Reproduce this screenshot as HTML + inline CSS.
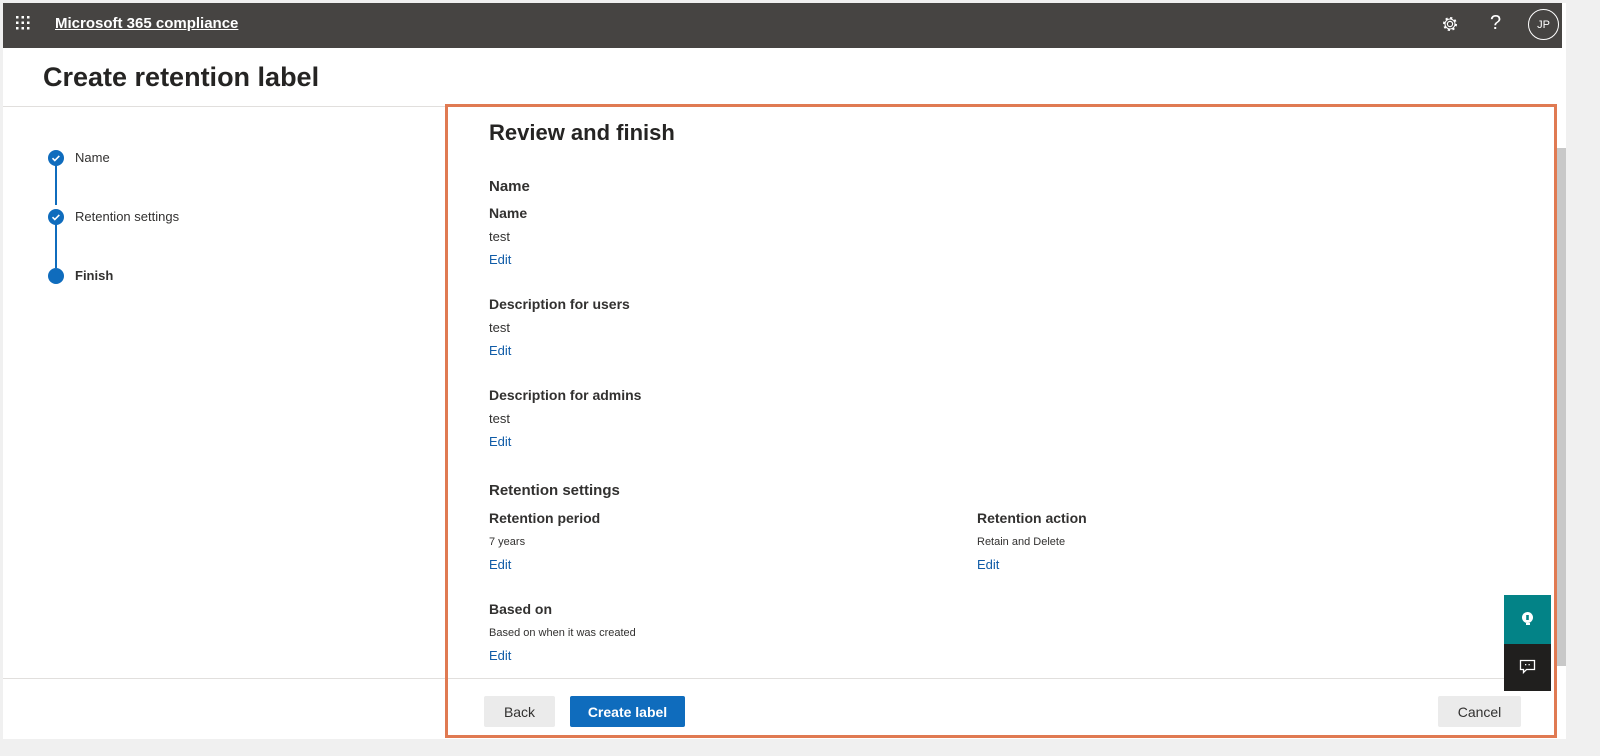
<!DOCTYPE html>
<html><head><meta charset="utf-8"><style>
*{margin:0;padding:0;box-sizing:border-box}
body{width:1600px;height:756px;background:#f0f0f0;font-family:"Segoe UI","Liberation Sans",sans-serif;color:#323130;position:relative;overflow:hidden}
.a{position:absolute;white-space:nowrap}
.page{position:absolute;left:3px;top:3px;width:1563px;height:736px;background:#fff}
.top{position:absolute;left:3px;top:3px;width:1559px;height:45px;background:#464442}
.h{font-weight:bold;font-size:14px;color:#323130}
.v{font-size:13px;color:#323130}
.s{font-size:11px;color:#323130}
.e{font-size:13px;color:#0f5ba7}
.btn{position:absolute;height:31px;font-size:14px;display:flex;align-items:center;justify-content:center;border-radius:2px}
</style></head><body>
<div class="page"></div>
<div class="top"></div>
<svg class="a" style="left:15px;top:15px" width="16" height="16"><g fill="#fff"><rect x="1" y="1" width="2.5" height="2.5"/><rect x="6.5" y="1" width="2.5" height="2.5"/><rect x="12" y="1" width="2.5" height="2.5"/><rect x="1" y="6.5" width="2.5" height="2.5"/><rect x="6.5" y="6.5" width="2.5" height="2.5"/><rect x="12" y="6.5" width="2.5" height="2.5"/><rect x="1" y="12" width="2.5" height="2.5"/><rect x="6.5" y="12" width="2.5" height="2.5"/><rect x="12" y="12" width="2.5" height="2.5"/></g></svg>
<div class="a" style="left:55px;top:15px;color:#fff;font-size:15px;font-weight:bold;text-decoration:underline">Microsoft 365 compliance</div>
<svg class="a" style="left:1441px;top:15px" width="18" height="18" viewBox="0 0 18 18"><circle cx="9" cy="9" r="2.6" fill="none" stroke="#fff" stroke-width="1.2"/><circle cx="9" cy="9" r="6" fill="none" stroke="#fff" stroke-width="2" stroke-dasharray="2.2 2.5"/><circle cx="9" cy="9" r="5" fill="none" stroke="#fff" stroke-width="1"/></svg>
<div class="a" style="left:1490px;top:12px;color:#fff;font-size:20px">?</div>
<div class="a" style="left:1528px;top:9px;width:31px;height:31px;border:1.5px solid #fff;border-radius:50%;color:#fff;font-size:11px;display:flex;align-items:center;justify-content:center">JP</div>
<div class="a" style="left:43px;top:62px;font-size:27px;font-weight:bold;color:#252423">Create retention label</div>
<div class="a" style="left:3px;top:106px;width:442px;height:1px;background:#e1dfdd"></div>
<div class="a" style="left:3px;top:678px;width:442px;height:1px;background:#e1dfdd"></div>
<div class="a" style="left:55px;top:165px;width:2px;height:40px;background:#0f6cbd"></div>
<div class="a" style="left:55px;top:224px;width:2px;height:44px;background:#0f6cbd"></div>
<svg class="a" style="left:48px;top:150px" width="16" height="16"><circle cx="8" cy="8" r="8" fill="#0f6cbd"/><path d="M4.5 8.2l2.3 2.3 4.5-4.6" stroke="#fff" stroke-width="1.6" fill="none"/></svg>
<svg class="a" style="left:48px;top:209px" width="16" height="16"><circle cx="8" cy="8" r="8" fill="#0f6cbd"/><path d="M4.5 8.2l2.3 2.3 4.5-4.6" stroke="#fff" stroke-width="1.6" fill="none"/></svg>
<div class="a" style="left:48px;top:268px;width:16px;height:16px;border-radius:50%;background:#0f6cbd"></div>
<div class="a v" style="left:75px;top:150px">Name</div>
<div class="a v" style="left:75px;top:209px">Retention settings</div>
<div class="a v" style="left:75px;top:268px;font-weight:bold">Finish</div>
<div class="a" style="left:445px;top:104px;width:1112px;height:634px;border:3px solid #e07a52"></div>
<div class="a" style="left:448px;top:678px;width:1056px;height:1px;background:#e1dfdd"></div>
<div class="a" style="left:1557px;top:148px;width:9px;height:518px;background:#c8c8c8"></div>
<div class="a" style="left:489px;top:120px;font-size:22px;font-weight:bold;color:#252423">Review and finish</div>
<div class="a" style="left:489px;top:178px;font-size:15px;font-weight:bold">Name</div>
<div class="a h" style="left:489px;top:205px;font-weight:600">Name</div>
<div class="a v" style="left:489px;top:229px">test</div>
<div class="a e" style="left:489px;top:252px">Edit</div>
<div class="a h" style="left:489px;top:296px;font-weight:600">Description for users</div>
<div class="a v" style="left:489px;top:320px">test</div>
<div class="a e" style="left:489px;top:343px">Edit</div>
<div class="a h" style="left:489px;top:387px;font-weight:600">Description for admins</div>
<div class="a v" style="left:489px;top:411px">test</div>
<div class="a e" style="left:489px;top:434px">Edit</div>
<div class="a" style="left:489px;top:482px;font-size:15px;font-weight:bold">Retention settings</div>
<div class="a h" style="left:489px;top:510px;font-weight:600">Retention period</div>
<div class="a s" style="left:489px;top:536px">7 years</div>
<div class="a e" style="left:489px;top:557px">Edit</div>
<div class="a h" style="left:977px;top:510px;font-weight:600">Retention action</div>
<div class="a s" style="left:977px;top:536px">Retain and Delete</div>
<div class="a e" style="left:977px;top:557px">Edit</div>
<div class="a h" style="left:489px;top:601px;font-weight:600">Based on</div>
<div class="a s" style="left:489px;top:627px">Based on when it was created</div>
<div class="a e" style="left:489px;top:648px">Edit</div>
<div class="btn" style="left:484px;top:696px;width:71px;background:#ebebeb">Back</div>
<div class="btn" style="left:570px;top:696px;width:115px;background:#0f6cbd;color:#fff;font-weight:bold">Create label</div>
<div class="btn" style="left:1438px;top:696px;width:83px;background:#ebebeb">Cancel</div>
<div class="a" style="left:1504px;top:595px;width:47px;height:49px;background:#038387"></div>
<svg class="a" style="left:1519px;top:610px" width="17" height="17" viewBox="0 0 17 17"><circle cx="8.5" cy="7.5" r="5.5" fill="#fff"/><rect x="7.2" y="5" width="2.6" height="5" fill="#038387"/><path d="M7 13h4v2H7z" fill="#fff"/></svg>
<div class="a" style="left:1504px;top:644px;width:47px;height:47px;background:#201f1e"></div>
<svg class="a" style="left:1519px;top:659px" width="17" height="16" viewBox="0 0 17 16"><path d="M1.5 1.5h14v9h-8l-3 3v-3h-3z" fill="none" stroke="#fff" stroke-width="1.3"/><rect x="6" y="5" width="1.3" height="1.3" fill="#fff"/><rect x="9.5" y="5" width="1.3" height="1.3" fill="#fff"/></svg>
</body></html>
